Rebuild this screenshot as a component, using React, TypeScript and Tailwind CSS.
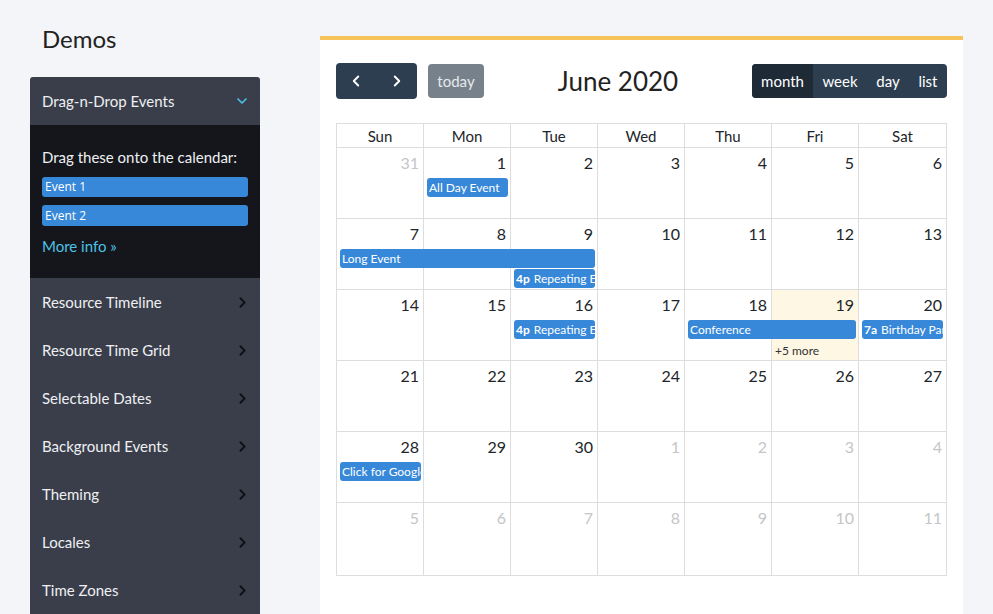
import { ChevronDown, ChevronLeft, ChevronRight } from 'lucide-react';

const MENU = [
  'Resource Timeline',
  'Resource Time Grid',
  'Selectable Dates',
  'Background Events',
  'Theming',
  'Locales',
  'Time Zones',
];

const DAYS = ['Sun', 'Mon', 'Tue', 'Wed', 'Thu', 'Fri', 'Sat'];

type Cell = { n: number; other?: boolean; today?: boolean };
type Ev = { col: number; span: number; row: number; title: string; time?: string };

const WEEKS: { cells: Cell[]; events: Ev[]; more?: { col: number; text: string } }[] = [
  {
    cells: [{ n: 31, other: true }, { n: 1 }, { n: 2 }, { n: 3 }, { n: 4 }, { n: 5 }, { n: 6 }],
    events: [{ col: 2, span: 1, row: 2, title: 'All Day Event' }],
  },
  {
    cells: [{ n: 7 }, { n: 8 }, { n: 9 }, { n: 10 }, { n: 11 }, { n: 12 }, { n: 13 }],
    events: [
      { col: 1, span: 3, row: 2, title: 'Long Event' },
      { col: 3, span: 1, row: 3, title: 'Repeating Event', time: '4p' },
    ],
  },
  {
    cells: [{ n: 14 }, { n: 15 }, { n: 16 }, { n: 17 }, { n: 18 }, { n: 19, today: true }, { n: 20 }],
    events: [
      { col: 3, span: 1, row: 2, title: 'Repeating Event', time: '4p' },
      { col: 5, span: 2, row: 2, title: 'Conference' },
      { col: 7, span: 1, row: 2, title: 'Birthday Party', time: '7a' },
    ],
    more: { col: 6, text: '+5 more' },
  },
  {
    cells: [{ n: 21 }, { n: 22 }, { n: 23 }, { n: 24 }, { n: 25 }, { n: 26 }, { n: 27 }],
    events: [],
  },
  {
    cells: [
      { n: 28 }, { n: 29 }, { n: 30 },
      { n: 1, other: true }, { n: 2, other: true }, { n: 3, other: true }, { n: 4, other: true },
    ],
    events: [{ col: 1, span: 1, row: 2, title: 'Click for Google' }],
  },
  {
    cells: [5, 6, 7, 8, 9, 10, 11].map((n) => ({ n, other: true })),
    events: [],
  },
];

const COL_START = ['', 'col-start-1', 'col-start-2', 'col-start-3', 'col-start-4', 'col-start-5', 'col-start-6', 'col-start-7'];
const COL_SPAN = ['', 'col-span-1', 'col-span-2', 'col-span-3'];
const ROW_START = ['', 'row-start-1', 'row-start-2', 'row-start-3', 'row-start-4'];

function Sidebar() {
  return (
    <div className="w-[230px] shrink-0">
      <h1 className="pl-3 pt-[21px] h-[77px] text-[24px] text-[#222] font-['Lato',sans-serif]">Demos</h1>
      <div className="rounded-t-[3px] overflow-hidden bg-[#3a3e4a] text-[15px] leading-5 text-[#eef0f3] font-['Lato',sans-serif]">
        <div className="h-12 pl-3 pr-[10px] flex items-center justify-between">
          <span>Drag-n-Drop Events</span>
          <ChevronDown size={16} strokeWidth={2.5} className="text-[#4cc1e6]" />
        </div>
        <div className="bg-[#14161b] px-3 pt-[22px] h-[153px]">
          <div className="mb-[10px]">Drag these onto the calendar:</div>
          <div className="h-5 mb-2 rounded-[3px] bg-[#3788d8] text-white text-[12px] leading-5 pl-[3px] font-['Open_Sans',sans-serif]">
            Event 1
          </div>
          <div className="h-[21px] rounded-[3px] bg-[#3788d8] text-white text-[12px] leading-[21px] pl-[3px] font-['Open_Sans',sans-serif]">
            Event 2
          </div>
          <div className="mt-[10px] text-[#4cc1e6]">More info »</div>
        </div>
        {MENU.map((m) => (
          <div key={m} className="h-12 pl-3 pr-[9px] flex items-center justify-between">
            <span>{m}</span>
            <ChevronRight size={17} strokeWidth={2.5} className="text-[#0d0f13]" />
          </div>
        ))}
      </div>
    </div>
  );
}

function Toolbar() {
  return (
    <div className="flex items-center justify-between h-9 mb-6 font-['Lato',sans-serif]">
      <div className="flex items-center gap-[11px]">
        <div className="flex h-9 rounded-[4px] bg-[#2c3e50] text-white">
          <button className="w-10 flex items-center justify-center">
            <ChevronLeft size={18} strokeWidth={2.5} />
          </button>
          <button className="w-[41px] flex items-center justify-center">
            <ChevronRight size={18} strokeWidth={2.5} />
          </button>
        </div>
        <button className="h-[34px] w-14 rounded-[4px] bg-[#77818b] text-[#e6e9ec] text-[15px]">today</button>
      </div>
      <div className="text-[26px] text-[#222]">June 2020</div>
      <div className="flex h-[34px] rounded-[4px] overflow-hidden bg-[#2c3e50] text-white text-[15px]">
        <button className="w-[61px] bg-[#1e2b37]">month</button>
        <button className="w-[54px]">week</button>
        <button className="w-[42px]">day</button>
        <button className="w-[38px]">list</button>
      </div>
    </div>
  );
}

function Calendar() {
  return (
    <div className="border border-[#ddd] text-[#212529] font-['Lato',sans-serif]">
      <div className="grid grid-cols-7 h-6 border-b border-[#ddd]">
        {DAYS.map((d, i) => (
          <div key={d} className={`text-center text-[15px] leading-6 ${i < 6 ? 'border-r border-[#ddd]' : ''}`}>
            {d}
          </div>
        ))}
      </div>
      {WEEKS.map((w, wi) => (
        <div
          key={wi}
          className={`grid grid-cols-7 grid-rows-[30px_20px_20px_1fr] ${wi < 5 ? 'h-[71px] border-b border-[#ddd]' : 'h-[72px]'}`}
        >
          {w.cells.map((c, ci) => (
            <div
              key={ci}
              className={`${COL_START[ci + 1]} row-[1/-1] text-right pr-1 pt-[5px] text-[16px] leading-5 ${
                ci < 6 ? 'border-r border-[#ddd]' : ''
              } ${c.today ? 'bg-[#fdf7e3]' : ''} ${c.other ? 'text-[#c4c6c8]' : ''}`}
            >
              {c.n}
            </div>
          ))}
          {w.events.map((e, ei) => (
            <div
              key={ei}
              className={`${COL_START[e.col]} ${COL_SPAN[e.span]} ${ROW_START[e.row]} relative z-10 mx-[3px] h-[19px] rounded-[3px] bg-[#3788d8] text-white text-[12px] leading-[19px] pl-[2px] whitespace-nowrap overflow-hidden`}
            >
              {e.time && <b className="font-bold mr-1">{e.time}</b>}
              {e.title}
            </div>
          ))}
          {w.more && (
            <div className={`${COL_START[w.more.col]} row-start-3 relative z-10 pl-[3px] pt-[3px] text-[12px] leading-4 text-[#333]`}>
              {w.more.text}
            </div>
          )}
        </div>
      ))}
    </div>
  );
}

export default function App() {
  return (
    <div className="min-h-[614px] bg-[#f4f5f8] flex pl-[30px] pr-[30px] overflow-hidden">
      <Sidebar />
      <div className="ml-[60px] mt-9 flex-1 bg-white border-t-4 border-[#f6c45a] px-4 pt-[23px] pb-10">
        <Toolbar />
        <Calendar />
      </div>
    </div>
  );
}
